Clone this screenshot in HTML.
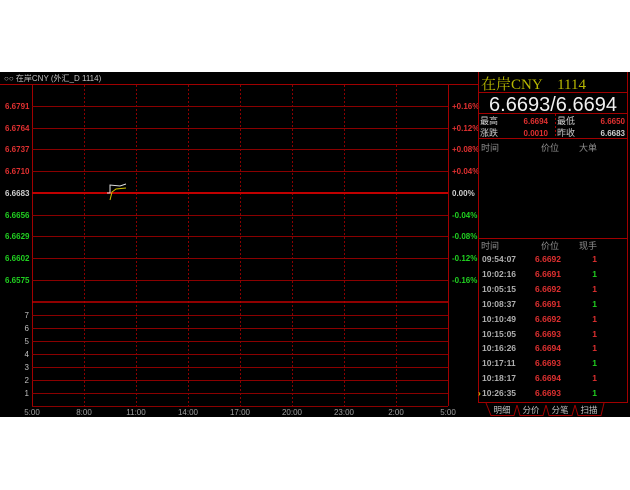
<!DOCTYPE html>
<html><head><meta charset="utf-8"><style>
html,body{margin:0;padding:0;background:#fff;width:630px;height:490px;overflow:hidden}
svg{display:block}
</style></head><body>
<svg width="630" height="490" xmlns="http://www.w3.org/2000/svg" font-family="'Liberation Sans','Noto Sans CJK SC',sans-serif" font-size="8">
<rect x="0" y="0" width="630" height="490" fill="#fff"/>
<rect x="0" y="72" width="630" height="345" fill="#000"/>
<text x="4" y="81" fill="#c0c0c0" font-size="8">○○ 在岸CNY (外汇_D 1114)</text>
<line x1="0" y1="84.5" x2="478" y2="84.5" stroke="#a00000" stroke-width="1"/>
<line x1="32.5" y1="84" x2="32.5" y2="406" stroke="#a00000"/>
<line x1="448.5" y1="84" x2="448.5" y2="406" stroke="#a00000"/>
<g stroke="#8a0000" stroke-dasharray="2,2">
<line x1="84.5" y1="85" x2="84.5" y2="406"/>
<line x1="136.5" y1="85" x2="136.5" y2="406"/>
<line x1="188.5" y1="85" x2="188.5" y2="406"/>
<line x1="240.5" y1="85" x2="240.5" y2="406"/>
<line x1="292.5" y1="85" x2="292.5" y2="406"/>
<line x1="344.5" y1="85" x2="344.5" y2="406"/>
<line x1="396.5" y1="85" x2="396.5" y2="406"/>
</g>
<g stroke="#8a0000">
<line x1="32" y1="106.5" x2="448" y2="106.5"/>
<line x1="32" y1="128.5" x2="448" y2="128.5"/>
<line x1="32" y1="149.5" x2="448" y2="149.5"/>
<line x1="32" y1="171.5" x2="448" y2="171.5"/>
<line x1="32" y1="215.5" x2="448" y2="215.5"/>
<line x1="32" y1="236.5" x2="448" y2="236.5"/>
<line x1="32" y1="258.5" x2="448" y2="258.5"/>
<line x1="32" y1="280.5" x2="448" y2="280.5"/>
<line x1="32" y1="315.5" x2="448" y2="315.5"/>
<line x1="32" y1="328.5" x2="448" y2="328.5"/>
<line x1="32" y1="341.5" x2="448" y2="341.5"/>
<line x1="32" y1="354.5" x2="448" y2="354.5"/>
<line x1="32" y1="367.5" x2="448" y2="367.5"/>
<line x1="32" y1="380.5" x2="448" y2="380.5"/>
<line x1="32" y1="393.5" x2="448" y2="393.5"/>
<line x1="32" y1="406.5" x2="448" y2="406.5"/>
</g>
<line x1="32" y1="193" x2="448" y2="193" stroke="#c00000" stroke-width="2"/>
<line x1="32" y1="302" x2="448" y2="302" stroke="#c00000" stroke-width="1.5"/>
<polyline points="107,193 110,193 110,185 120,186 126,184" fill="none" stroke="#e0e0e0" stroke-width="1"/>
<polyline points="110,200 112,192 116,189 126,188" fill="none" stroke="#d0c000" stroke-width="1"/>
<g font-weight="bold" font-size="8">
<text x="5" y="109" fill="#e03030">6.6791</text>
<text x="5" y="131" fill="#e03030">6.6764</text>
<text x="5" y="152" fill="#e03030">6.6737</text>
<text x="5" y="174" fill="#e03030">6.6710</text>
<text x="5" y="196" fill="#d0d0d0">6.6683</text>
<text x="5" y="218" fill="#20d020">6.6656</text>
<text x="5" y="239" fill="#20d020">6.6629</text>
<text x="5" y="261" fill="#20d020">6.6602</text>
<text x="5" y="283" fill="#20d020">6.6575</text>
<text x="452" y="109" fill="#e03030">+0.16%</text>
<text x="452" y="131" fill="#e03030">+0.12%</text>
<text x="452" y="152" fill="#e03030">+0.08%</text>
<text x="452" y="174" fill="#e03030">+0.04%</text>
<text x="452" y="196" fill="#d0d0d0">0.00%</text>
<text x="452" y="218" fill="#20d020">-0.04%</text>
<text x="452" y="239" fill="#20d020">-0.08%</text>
<text x="452" y="261" fill="#20d020">-0.12%</text>
<text x="452" y="283" fill="#20d020">-0.16%</text>
</g>
<g fill="#c0c0c0" font-size="8" text-anchor="end">
<text x="29" y="318">7</text><text x="29" y="331">6</text><text x="29" y="344">5</text>
<text x="29" y="357">4</text><text x="29" y="370">3</text><text x="29" y="383">2</text><text x="29" y="396">1</text>
</g>
<g fill="#a0a0a0" font-size="8" text-anchor="middle">
<text x="32" y="415">5:00</text><text x="84" y="415">8:00</text><text x="136" y="415">11:00</text>
<text x="188" y="415">14:00</text><text x="240" y="415">17:00</text><text x="292" y="415">20:00</text>
<text x="344" y="415">23:00</text><text x="396" y="415">2:00</text><text x="448" y="415">5:00</text>
</g>
<g stroke="#a00000" fill="none">
<line x1="478.5" y1="72" x2="478.5" y2="403"/>
<line x1="627.5" y1="72" x2="627.5" y2="403"/>
<line x1="478" y1="92.5" x2="628" y2="92.5"/>
<line x1="478" y1="113.5" x2="628" y2="113.5"/>
<line x1="478" y1="138.5" x2="628" y2="138.5"/>
<line x1="478" y1="238.5" x2="628" y2="238.5"/>
<line x1="555.5" y1="114" x2="555.5" y2="138" stroke-dasharray="2,2"/>
<line x1="478" y1="402.5" x2="628" y2="402.5"/>
<path d="M486,403 L491,415.5 L514,415.5 L517,405 M517,405 L520,415.5 L543,415.5 L546,405 M546,405 L549,415.5 L572,415.5 L575,405 M575,405 L578,415.5 L601,415.5 L604,403"/>
</g>
<text x="481" y="89" fill="#b8b800" font-family="'Liberation Serif','Noto Serif CJK SC',serif" font-size="15">在岸CNY　1114</text>
<text x="553" y="111" fill="#f0f0f0" font-size="20" text-anchor="middle">6.6693/6.6694</text>
<g font-size="9">
<text x="480" y="124" fill="#d0d0d0">最高</text>
<text x="548" y="124" fill="#e03030" text-anchor="end" font-weight="bold" font-size="8">6.6694</text>
<text x="557" y="124" fill="#d0d0d0">最低</text>
<text x="625" y="124" fill="#e03030" text-anchor="end" font-weight="bold" font-size="8">6.6650</text>
<text x="480" y="136" fill="#d0d0d0">涨跌</text>
<text x="548" y="136" fill="#e03030" text-anchor="end" font-weight="bold" font-size="8">0.0010</text>
<text x="557" y="136" fill="#d0d0d0">昨收</text>
<text x="625" y="136" fill="#d0d0d0" text-anchor="end" font-weight="bold" font-size="8">6.6683</text>
<text x="481" y="151" fill="#909090">时间</text>
<text x="541" y="151" fill="#909090">价位</text>
<text x="579" y="151" fill="#909090">大单</text>
<text x="481" y="249" fill="#909090">时间</text>
<text x="541" y="249" fill="#909090">价位</text>
<text x="579" y="249" fill="#909090">现手</text>
</g>
<g font-size="8.5" font-weight="bold">
<g fill="#b0b0b0">
<text x="482" y="262">09:54:07</text><text x="482" y="277">10:02:16</text><text x="482" y="292">10:05:15</text>
<text x="482" y="307">10:08:37</text><text x="482" y="322">10:10:49</text><text x="482" y="337">10:15:05</text>
<text x="482" y="351">10:16:26</text><text x="482" y="366">10:17:11</text><text x="482" y="381">10:18:17</text>
<text x="482" y="396">10:26:35</text>
</g>
<g fill="#e03030">
<text x="535" y="262">6.6692</text><text x="535" y="277">6.6691</text><text x="535" y="292">6.6692</text>
<text x="535" y="307">6.6691</text><text x="535" y="322">6.6692</text><text x="535" y="337">6.6693</text>
<text x="535" y="351">6.6694</text><text x="535" y="366">6.6693</text><text x="535" y="381">6.6694</text>
<text x="535" y="396">6.6693</text>
</g>
<g text-anchor="end">
<text x="597" y="262" fill="#e03030">1</text><text x="597" y="277" fill="#20d020">1</text>
<text x="597" y="292" fill="#e03030">1</text><text x="597" y="307" fill="#20d020">1</text>
<text x="597" y="322" fill="#e03030">1</text><text x="597" y="337" fill="#e03030">1</text>
<text x="597" y="351" fill="#e03030">1</text><text x="597" y="366" fill="#20d020">1</text>
<text x="597" y="381" fill="#e03030">1</text><text x="597" y="396" fill="#20d020">1</text>
</g>
<text x="478" y="396" fill="#d0c000">›</text>
</g>
<g fill="#c0c0c0" font-size="8.5" text-anchor="middle">
<text x="502" y="413">明细</text><text x="531" y="413">分价</text>
<text x="560" y="413">分笔</text><text x="589" y="413">扫描</text>
</g>
</svg>
</body></html>
